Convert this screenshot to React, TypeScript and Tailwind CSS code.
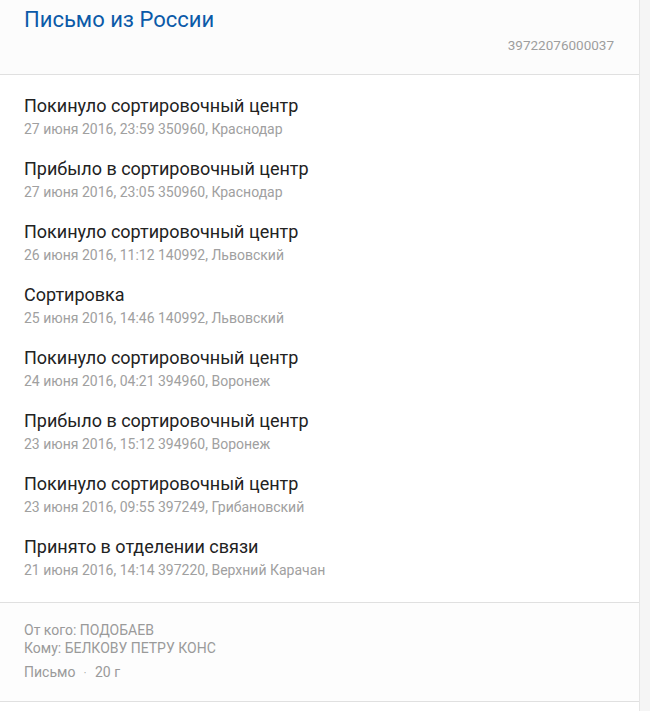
const events = [
  { title: 'Покинуло сортировочный центр', meta: '27 июня 2016, 23:59 350960, Краснодар' },
  { title: 'Прибыло в сортировочный центр', meta: '27 июня 2016, 23:05 350960, Краснодар' },
  { title: 'Покинуло сортировочный центр', meta: '26 июня 2016, 11:12 140992, Львовский' },
  { title: 'Сортировка', meta: '25 июня 2016, 14:46 140992, Львовский' },
  { title: 'Покинуло сортировочный центр', meta: '24 июня 2016, 04:21 394960, Воронеж' },
  { title: 'Прибыло в сортировочный центр', meta: '23 июня 2016, 15:12 394960, Воронеж' },
  { title: 'Покинуло сортировочный центр', meta: '23 июня 2016, 09:55 397249, Грибановский' },
  { title: 'Принято в отделении связи', meta: '21 июня 2016, 14:14 397220, Верхний Карачан' },
];

export default function App() {
  return (
    <div className="flex min-h-[711px] bg-[#f5f5f5] font-['Roboto',sans-serif]">
      <div className="w-[640px] shrink-0 bg-white border-r border-[#e6e6e6]">
        {/* шапка */}
        <div className="bg-[#fcfcfc] pl-6 pr-[25px] pt-[6px] pb-5 border-b border-[#e0e0e0]">
          <h1 className="text-[22px] leading-7 text-[#0b5aa8]">Письмо из России</h1>
          <div className="mt-[2px] text-right text-[13.5px] leading-[18px] text-[#9e9e9e]">39722076000037</div>
        </div>

        <div className="flex flex-col gap-[18px] px-6 pt-[19px] pb-[22px] border-b border-[#e0e0e0]">
          {events.map((ev, i) => (
            <div key={i}>
              <div className="text-[18px] leading-6 text-[#222]">{ev.title}</div>
              <div className="mt-px text-[14px] leading-5 text-[#a0a0a0]">{ev.meta}</div>
            </div>
          ))}
        </div>

        <div className="bg-[#fdfdfd] px-6 pt-[18px] pb-[18px] border-b border-[#e0e0e0] text-[14px] leading-[18px] text-[#9a9a9a]">
          <div>От кого: ПОДОБАЕВ</div>
          <div>Кому: БЕЛКОВУ ПЕТРУ КОНС</div>
          <div className="mt-[6px]">
            Письмо <span className="mx-[5px] text-[10px]">·</span> 20 г
          </div>
        </div>
      </div>
    </div>
  );
}
